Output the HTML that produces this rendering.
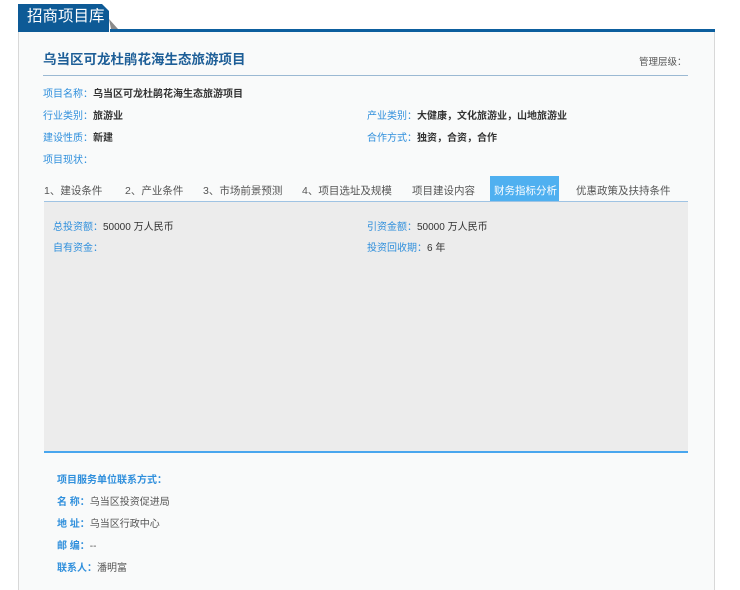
<!DOCTYPE html>
<html><head><meta charset="utf-8">
<style>
*{margin:0;padding:0;box-sizing:border-box}
body{width:740px;height:575px;background:#fff;font-family:"Liberation Sans","Noto Sans CJK SC",sans-serif;font-size:10px;color:#333;position:relative;overflow:hidden}
.a{position:absolute;white-space:nowrap}
.lb{color:#2f8fdc}
.v{color:#333;font-weight:bold}
.t{font-size:10.5px;color:#555;top:183px}
</style></head><body>
<div class="a" style="left:18px;top:30px;width:697px;height:560px;background:#f9fafa;border-left:1px solid #d8d8d8;border-right:1px solid #d8d8d8"></div>
<div class="a" style="left:110px;top:29px;width:605px;height:3px;background:#0d5f9e"></div>
<svg class="a" style="left:18px;top:4px" width="100" height="28"><path d="M0 0H84L91 7V28H0Z" fill="#0d5a96"/><path d="M91 15L100 25H93Z" fill="#8a8a8a"/></svg>
<div class="a" style="left:27px;top:7px;font-size:15.5px;color:#fff;line-height:20px">招商项目库</div>
<div class="a" style="left:43px;top:51px;font-size:13.5px;font-weight:bold;color:#1d5e97;line-height:18px">乌当区可龙杜鹃花海生态旅游项目</div>
<div class="a" style="left:639px;top:54px;font-size:9.5px;color:#555">管理层级：</div>
<div class="a" style="left:43px;top:75px;width:645px;height:1px;background:#9bb9d3"></div>
<div class="a" style="left:43px;top:85px"><span class="lb">项目名称：</span><span class="v">乌当区可龙杜鹃花海生态旅游项目</span></div>
<div class="a" style="left:43px;top:107px"><span class="lb">行业类别：</span><span class="v">旅游业</span></div>
<div class="a" style="left:367px;top:107px"><span class="lb">产业类别：</span><span class="v">大健康，文化旅游业，山地旅游业</span></div>
<div class="a" style="left:43px;top:129px"><span class="lb">建设性质：</span><span class="v">新建</span></div>
<div class="a" style="left:367px;top:129px"><span class="lb">合作方式：</span><span class="v">独资，合资，合作</span></div>
<div class="a" style="left:43px;top:151px"><span class="lb">项目现状：</span></div>
<div class="a" style="left:490px;top:176px;width:69px;height:25px;background:#4fb0f0"></div>
<div class="a t" style="left:44px">1、建设条件</div>
<div class="a t" style="left:125px">2、产业条件</div>
<div class="a t" style="left:203px">3、市场前景预测</div>
<div class="a t" style="left:302px">4、项目选址及规模</div>
<div class="a t" style="left:412px">项目建设内容</div>
<div class="a t" style="left:494px;color:#fff">财务指标分析</div>
<div class="a t" style="left:576px">优惠政策及扶持条件</div>
<div class="a" style="left:44px;top:201px;width:644px;height:1px;background:#9fc3e3"></div>
<div class="a" style="left:44px;top:202px;width:644px;height:249px;background:#ececec"></div>
<div class="a" style="left:44px;top:451px;width:644px;height:2px;background:#49a6ee"></div>
<div class="a" style="left:53px;top:218px"><span class="lb">总投资额：</span>50000 万人民币</div>
<div class="a" style="left:367px;top:218px"><span class="lb">引资金额：</span>50000 万人民币</div>
<div class="a" style="left:53px;top:239px"><span class="lb">自有资金：</span></div>
<div class="a" style="left:367px;top:239px"><span class="lb">投资回收期：</span>6 年</div>
<div class="a" style="left:57px;top:471px"><span class="lb" style="font-weight:bold">项目服务单位联系方式：</span></div>
<div class="a" style="left:57px;top:493px"><span class="lb" style="font-weight:bold">名 称：</span><span style="color:#555">乌当区投资促进局</span></div>
<div class="a" style="left:57px;top:515px"><span class="lb" style="font-weight:bold">地 址：</span><span style="color:#555">乌当区行政中心</span></div>
<div class="a" style="left:57px;top:537px"><span class="lb" style="font-weight:bold">邮 编：</span><span style="color:#555">--</span></div>
<div class="a" style="left:57px;top:559px"><span class="lb" style="font-weight:bold">联系人：</span><span style="color:#555">潘明富</span></div>
</body></html>
